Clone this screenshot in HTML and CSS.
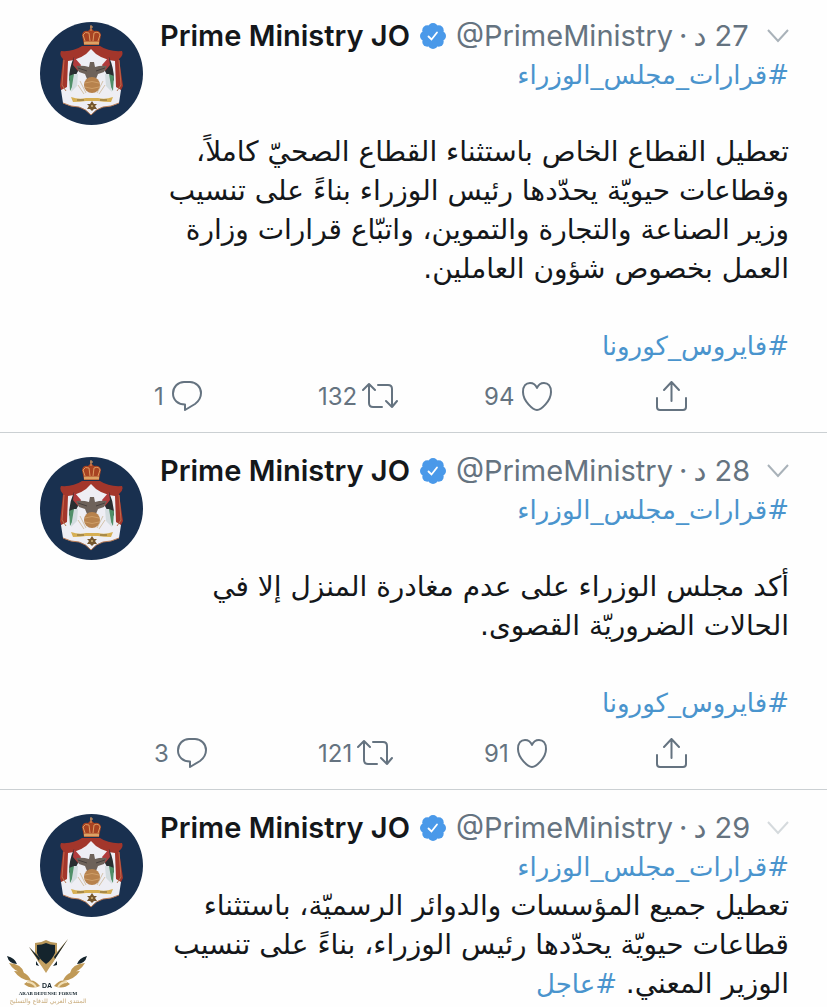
FILE: index.html
```
<!DOCTYPE html>
<html lang="ar">
<head>
<meta charset="UTF-8">
<meta name="viewport" content="width=device-width, initial-scale=1.0">
<title>Prime Ministry JO</title>
<link rel="stylesheet" href="styles.css">
</head>
<body>
    <!-- Shared icons -->
    <svg class="sprite" aria-hidden="true">
        <symbol id="crest" viewBox="0 0 103 103">
            <circle cx="51.500" cy="51.500" r="51.500" fill="#19304f"/>
            <!-- Shield -->
            <path d="M51 25Q60 35 77 37L80 62L81 68L79 81Q71 85 63 85Q56 87 51 93Q46 87 39 85Q31 85 23 81L21 68L24 62L27 37Q42 35 51 25Z" fill="#eeeef4"/>
            <!-- Mantle -->
            <path d="M42 24Q33 30 21 29Q19 33 23 37L20 64L21 68L27 65L28 39Q43 37 51 27Q59 37 75 39L76 65L81 68L83 64L79 37Q84 33 82 29Q69 30 60 24Z" fill="#a3362b"/>
            <path d="M24 38L22 63M79 38L81 63" stroke="#c4684a" stroke-width="1" fill="none"/>
            <path d="M22 63L26 69M81 63L77 69M23 81Q31 85 39 85Q46 87 51 93Q56 87 63 85Q71 85 79 81" fill="none" stroke="#b77a54" stroke-width="1"/>
            <!-- Crown -->
            <path d="M44 23L42 13Q43 8 48 9L51 6L54 9Q60 8 61 13L59 23Z" fill="#a84322"/>
            <path d="M45 19L43 13Q45 9 49 11L50 19M53 19L54 11Q59 9 60 13L58 19M51 3V9M50 5H53" fill="none" stroke="#dd9a60" stroke-width="1"/>
            <path d="M44 21H59" stroke="#dda365" stroke-width="3"/>
            <!-- Flags -->
            <path d="M34 35L40 45L37 51L32 61L29 58Q29 46 34 35ZM69 35L63 45L66 51L71 61L74 58Q74 46 69 35Z" fill="#292e31"/>
            <path d="M34 35L41 43L38 49L33 43ZM69 35L62 43L65 49L70 43Z" fill="#b13b3c"/>
            <path d="M29 54L34 52L34 62L30 69ZM74 54L69 52L69 62L73 69Z" fill="#4f8f68"/>
            <path d="M34 52L38 52L37 64L31 70ZM69 52L65 52L66 64L72 70Z" fill="#d3dcdf"/>
            <!-- Eagle and globe -->
            <path d="M36 44Q43 43 49 45L50 40H54L55 45Q61 43 67 44L64 50L58 52L56 57H47L45 52L39 50Z" fill="#6e625a"/>
            <path d="M38 46L47 49M65 46L56 49" stroke="#49413e" stroke-width="1"/>
            <path d="M40 59L46 71M63 59L57 71M38 63L44 72M65 63L59 72" stroke="#d3c2a8" stroke-width="1"/>
            <circle cx="52" cy="63" r="8" fill="#b7824d"/>
            <path d="M45 61Q52 58 59 61M45 65Q52 68 59 65" fill="none" stroke="#cf9f68" stroke-width="1"/>
            <!-- Ribbon and star -->
            <path d="M31 75Q39 78 46 76H58Q65 78 73 75L71 80Q63 80 58 79H46Q40 80 33 80Z" fill="#d6af54"/>
            <path d="M37 78H44M60 78H67" stroke="#7b653c" stroke-width="1"/>
            <path d="M52 79L54 82L57 82L55 84L57 87L54 87L52 89L50 87L47 87L49 84L47 82L50 82Z" fill="#75572e"/>
            <circle cx="52" cy="84" r="1" fill="#d1b377"/>
        </symbol>
        <symbol id="verified" viewBox="0 0 26 26">
            <g fill="#4a99e9">
                <circle cx="13" cy="13" r="10"/>
                <circle cx="13" cy="5" r="5"/><circle cx="18.700" cy="7.300" r="5"/>
                <circle cx="21" cy="13" r="5"/><circle cx="18.700" cy="18.700" r="5"/>
                <circle cx="13" cy="21" r="5"/><circle cx="7.300" cy="18.700" r="5"/>
                <circle cx="5" cy="13" r="5"/><circle cx="7.300" cy="7.300" r="5"/>
            </g>
            <path d="M8.500 13.500L11.500 16.500L17 9.500" fill="none" stroke="#fff" stroke-width="1.800" stroke-linecap="round"/>
        </symbol>
        <symbol id="chevron" viewBox="0 0 22 14">
            <path d="M1 1L11 12L21 1" fill="none" stroke="currentColor" stroke-width="2"/>
        </symbol>
        <symbol id="reply" viewBox="0 0 36 36">
            <path d="M16 26.500C9 26.500 4 22 4 15.500C4 9 9 4 15 4H21C27 4 32 9 32 15C32 20 30 23 26 26L16 32Z"/>
        </symbol>
        <symbol id="retweet" viewBox="0 0 36 36">
            <path d="M1 12L7 6L13 12M7 7V25Q7 29 11 29H20M16 7H26Q30 7 30 11V29M24 23L30 29L35 23"/>
        </symbol>
        <symbol id="like" viewBox="0 0 36 36">
            <path d="M18 32C14 32 4 23 4 14C4 8 7 5 11 5C14.500 5 17 7.500 18 10C19 7.500 21.500 5 25 5C29 5 32 8 32 14C32 23 22 32 18 32Z"/>
        </symbol>
        <symbol id="share" viewBox="0 0 36 36">
            <path d="M4 20V29Q4 32 7 32H30Q33 32 33 29V20M18.500 23V4M11 12L18.500 4L26 12"/>
        </symbol>
    </svg>

    <main class="timeline">
        <article class="tweet">
            <svg class="avatar" role="img" aria-label="Prime Ministry JO"><use href="#crest"/></svg>
            <div class="content">
                <header class="tweet-header">
                    <a class="name" href="#">Prime Ministry JO</a>
                    <svg class="verified"><use href="#verified"/></svg>
                    <span class="handle">@PrimeMinistry</span>
                    <span class="dot">·</span>
                    <time class="time" dir="rtl">27 د</time>
                    <button class="more" type="button" aria-label="المزيد"><svg><use href="#chevron"/></svg></button>
                </header>
                <div class="text" dir="rtl">
                    <p><a href="#">#قرارات_مجلس_الوزراء</a></p>
                    <p>تعطيل القطاع الخاص باستثناء القطاع الصحيّ كاملاً،<br>وقطاعات حيويّة يحدّدها رئيس الوزراء بناءً على تنسيب<br>وزير الصناعة والتجارة والتموين، واتبّاع قرارات وزارة<br>العمل بخصوص شؤون العاملين.</p>
                    <p><a href="#">#فايروس_كورونا</a></p>
                </div>
                <footer class="actions">
                    <button type="button" aria-label="رد"><span>1</span><svg><use href="#reply"/></svg></button>
                    <button type="button" aria-label="إعادة تغريد"><span>132</span><svg><use href="#retweet"/></svg></button>
                    <button type="button" aria-label="إعجاب"><span>94</span><svg><use href="#like"/></svg></button>
                    <button type="button" aria-label="مشاركة"><svg><use href="#share"/></svg></button>
                </footer>
            </div>
        </article>

        <article class="tweet">
            <svg class="avatar" role="img" aria-label="Prime Ministry JO"><use href="#crest"/></svg>
            <div class="content">
                <header class="tweet-header">
                    <a class="name" href="#">Prime Ministry JO</a>
                    <svg class="verified"><use href="#verified"/></svg>
                    <span class="handle">@PrimeMinistry</span>
                    <span class="dot">·</span>
                    <time class="time" dir="rtl">28 د</time>
                    <button class="more" type="button" aria-label="المزيد"><svg><use href="#chevron"/></svg></button>
                </header>
                <div class="text" dir="rtl">
                    <p><a href="#">#قرارات_مجلس_الوزراء</a></p>
                    <p>أكد مجلس الوزراء على عدم مغادرة المنزل إلا في<br>الحالات الضروريّة القصوى.</p>
                    <p><a href="#">#فايروس_كورونا</a></p>
                </div>
                <footer class="actions">
                    <button type="button" aria-label="رد"><span>3</span><svg><use href="#reply"/></svg></button>
                    <button type="button" aria-label="إعادة تغريد"><span>121</span><svg><use href="#retweet"/></svg></button>
                    <button type="button" aria-label="إعجاب"><span>91</span><svg><use href="#like"/></svg></button>
                    <button type="button" aria-label="مشاركة"><svg><use href="#share"/></svg></button>
                </footer>
            </div>
        </article>

        <article class="tweet">
            <svg class="avatar" role="img" aria-label="Prime Ministry JO"><use href="#crest"/></svg>
            <div class="content">
                <header class="tweet-header">
                    <a class="name" href="#">Prime Ministry JO</a>
                    <svg class="verified"><use href="#verified"/></svg>
                    <span class="handle">@PrimeMinistry</span>
                    <span class="dot">·</span>
                    <time class="time" dir="rtl">29 د</time>
                    <button class="more faded" type="button" aria-label="المزيد"><svg><use href="#chevron"/></svg></button>
                </header>
                <div class="text" dir="rtl">
                    <p><a href="#">#قرارات_مجلس_الوزراء</a><br>تعطيل جميع المؤسسات والدوائر الرسميّة، باستثناء<br>قطاعات حيويّة يحدّدها رئيس الوزراء، بناءً على تنسيب<br>الوزير المعني. <a href="#">#عاجل</a></p>
                </div>
            </div>
        </article>
    </main>

    <!-- Forum badge over the corner of the feed -->
    <svg class="forum-logo" viewBox="0 0 96 72" role="img" aria-label="Arab Defense Forum">
        <path d="M35 8Q41 8 46 5Q51 8 57 8V19Q54 29 46 34Q37 28 35 19Z" fill="#b8975a"/>
        <path d="M29 12L46 30L68 4L46 38Z" fill="#c4a162"/>
        <path d="M37 10Q42 10 46 8Q50 10 55 10V18Q52 25 46 29Q39 24 37 18Z" fill="#14242d"/>
        <path d="M29 12L40 23L39 26ZM68 4L54 22L55 24Z" fill="#14242d"/>
        <path d="M36 26L39 31L36 30ZM57 26L53 31L57 30Z" fill="#14242d"/>
        <path d="M7 21Q15 23 17 29Q9 29 7 21ZM87 21Q79 23 77 29Q85 29 87 21Z" fill="#14242d"/>
        <path d="M9 28Q22 29 24 38Q14 37 9 28ZM14 36Q28 36 31 46Q20 45 14 36ZM24 49Q32 41 40 51Q31 55 24 49ZM85 28Q72 29 70 38Q80 37 85 28ZM80 36Q66 36 63 46Q74 45 80 36ZM70 49Q62 41 54 51Q63 55 70 49Z" fill="#c09a57"/>
        <path d="M27 47Q33 47 36 52M67 47Q61 47 58 52" fill="none" stroke="#f1dfb5" stroke-width="2"/>
        <text class="logo-mark" x="47" y="53" text-anchor="middle">DA</text>
        <text class="logo-en" x="48" y="60" text-anchor="middle">ARAB DEFENSE FORUM</text>
        <text class="logo-ar" x="48" y="68" text-anchor="middle">المنتدى العربي للدفاع والتسليح</text>
    </svg>
</body>
</html>
```
FILE: styles.css
```
* {
    box-sizing: border-box;
}

body {
    margin: 0;
    background: #fefefe;
    color: #14171a;
    font-family: Inter, "DejaVu Sans", sans-serif;
}

a {
    color: #4a94cd;
    text-decoration: none;
}

button {
    padding: 0;
    border: none;
    background: none;
    color: inherit;
    font: inherit;
    cursor: pointer;
}

.sprite {
    display: none;
}

.tweet {
    display: flex;
    align-items: flex-start;
    gap: 17px;
    padding: 18px 38px 18px 40px;
    border-bottom: 1px solid #cbd0d3;
}

.tweet:first-child {
    padding-top: 16px;
}

.tweet:last-child {
    padding-bottom: 0;
    border-bottom: none;
}

.avatar {
    flex: none;
    width: 103px;
    height: 103px;
    margin-top: 6px;
}

.content {
    flex: 1;
    min-width: 0;
}

.tweet-header {
    display: flex;
    align-items: center;
    height: 39px;
    font-size: 29px;
    line-height: 39px;
    white-space: nowrap;
    color: #657380;
}

.name {
    color: #14171a;
    font-weight: 600;
}

.verified {
    flex: none;
    width: 26px;
    height: 26px;
    margin: 0 10px;
}

.dot {
    margin: 0 6px;
}

.more {
    display: flex;
    margin-left: auto;
    color: #a9b2b9;
}

.more svg {
    width: 22px;
    height: 14px;
}

.faded {
    color: #d5dadd;
}

.text {
    font-family: "DejaVu Sans", sans-serif;
    font-size: 28px;
    line-height: 39px;
    white-space: nowrap;
}

.text a {
    font-size: 26px;
    line-height: 26px;
}

.text p {
    margin: 0;
}

.text p + p {
    margin-top: 38px;
}

.actions {
    display: grid;
    grid-template-columns: 164fr 166fr 169fr 136fr;
    margin: 13px 0 0 -6px;
    color: #657380;
    font-size: 24px;
}

.actions button {
    display: flex;
    align-items: center;
    gap: 5px;
    height: 36px;
}

.actions svg {
    width: 36px;
    height: 36px;
    fill: none;
    stroke: #657380;
    stroke-width: 2;
    stroke-linecap: round;
    stroke-linejoin: round;
}

.forum-logo {
    position: fixed;
    left: 0;
    bottom: 0;
    width: 96px;
    height: 72px;
}

.logo-mark {
    fill: #14242d;
    font: bold 7px "Liberation Sans", sans-serif;
}

.logo-en {
    fill: #14242d;
    font: bold 5px "Liberation Serif", serif;
}

.logo-ar {
    fill: #c7a978;
    font: 6px "DejaVu Sans", sans-serif;
}
```
